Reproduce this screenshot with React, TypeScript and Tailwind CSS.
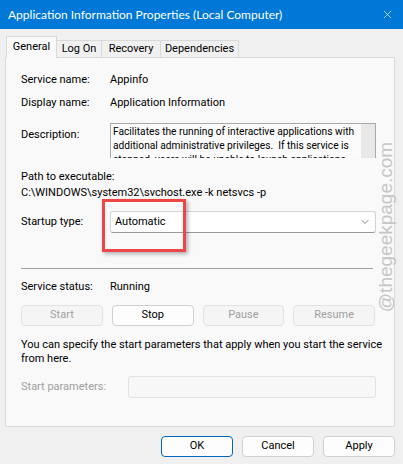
import { X, ChevronDown } from "lucide-react";

const font = "font-['Roboto','Noto_Sans',sans-serif]";

function Btn({ label, disabled, primary }: { label: string; disabled?: boolean; primary?: boolean }) {
  return (
    <div
      className={`flex h-[21px] items-center justify-center rounded-[4px] border ${
        disabled
          ? "border-[#e2e2e2] bg-[#f5f5f5] text-[#a0a0a0]"
          : primary
            ? "border-[#0067c0] bg-[#fdfdfd] text-black"
            : "border-[#d0d0d0] bg-[#fdfdfd] text-black"
      }`}
    >
      {label}
    </div>
  );
}

export default function App() {
  return (
    <div className={`relative h-[464px] w-[403px] overflow-hidden bg-[#f0f0f0] text-[11px] text-black ${font}`}>
      {/* title bar */}
      <div className="flex h-[29px] items-center justify-between bg-[#0078d7] pr-[9px] pl-[8px] font-['Lato',sans-serif] text-[12px] text-white">
        <span>Application Information Properties (Local Computer)</span>
        <X size={13} strokeWidth={1.2} />
      </div>

      {/* tabs */}
      <div className="relative z-10 mt-[7px] flex h-[21px] items-end pl-[6px]">
        <div className="mb-[-1px] flex h-[22px] w-[51px] items-start justify-center border border-b-0 border-[#d9d9d9] bg-[#f9f9f9] pt-[2px]">
          General
        </div>
        <div className="flex h-[17px] w-[45px] items-center justify-center border border-b-0 border-l-0 border-[#d9d9d9]">
          Log On
        </div>
        <div className="flex h-[17px] w-[59px] items-center justify-center border border-b-0 border-l-0 border-[#d9d9d9]">
          Recovery
        </div>
        <div className="flex h-[17px] w-[78px] items-center justify-center border border-b-0 border-l-0 border-[#d9d9d9]">
          Dependencies
        </div>
      </div>

      {/* panel */}
      <div className="ml-[5px] flex h-[370px] w-[390px] flex-col border border-[#dadada] bg-[#f9f9f9] pr-[18px] pl-[15px]">
        <div className="mt-[14px] flex h-4 items-center leading-4">
          <span className="w-[89px]">Service name:</span>
          <span>Appinfo</span>
        </div>
        <div className="mt-[7px] flex h-4 items-center leading-4">
          <span className="w-[89px]">Display name:</span>
          <span>Application Information</span>
        </div>
        <div className="mt-[12px] flex h-[35px]">
          <span className="w-[89px] pt-[4px] leading-4">Description:</span>
          <div className="flex h-[35px] w-[266px] overflow-hidden border border-b-0 border-[#a8a8a8] bg-[#fbfbfb]">
            <div className="min-w-0 flex-1 overflow-hidden pt-px pl-[2px] text-[10.2px] leading-[14px] whitespace-pre">
              <div>Facilitates the running of interactive applications with</div>
              <div>additional administrative privileges.  If this service is</div>
              <div>stopped, users will be unable to launch applications</div>
            </div>
            <div className="w-[14px] shrink-0 bg-[#e8e8e8]" />
          </div>
        </div>
        <div className="mt-[11px] h-4 leading-4">Path to executable:</div>
        <div className="h-4 leading-4">C:\WINDOWS\system32\svchost.exe -k netsvcs -p</div>
        <div className="mt-[10px] flex h-[22px] items-center">
          <span className="w-[89px]">Startup type:</span>
          <div className="flex h-[22px] w-[266px] items-center justify-between rounded-[3px] border border-[#d4d4d4] border-b-[#9a9a9a] bg-white pr-[4px] pl-[4px]">
            <span>Automatic</span>
            <ChevronDown size={12} strokeWidth={1.3} className="text-[#444]" />
          </div>
        </div>
        <div className="mt-[35px] h-px w-[352px] bg-[#a0a0a0]" />
        <div className="mt-[10px] flex h-4 items-center leading-4">
          <span className="w-[89px]">Service status:</span>
          <span>Running</span>
        </div>
        <div className="mt-[10px] grid w-[354px] grid-cols-4 gap-[9px]">
          <Btn label="Start" disabled />
          <Btn label="Stop" />
          <Btn label="Pause" disabled />
          <Btn label="Resume" disabled />
        </div>
        <div className="mt-[12px] leading-[14px] whitespace-nowrap">
          You can specify the start parameters that apply when you start the service
          <br />
          from here.
        </div>
        <div className="mt-[10px] flex h-[22px] items-center">
          <span className="w-[107px] text-[#a0a0a0]">Start parameters:</span>
          <div className="h-[22px] w-[248px] rounded-[3px] border border-[#e3e3e3] bg-[#f7f7f7]" />
        </div>
      </div>

      {/* dialog buttons */}
      <div className="mt-[9px] flex justify-end gap-[9px] pr-[8px]">
        <div className="w-[72px]">
          <Btn label="OK" primary />
        </div>
        <div className="w-[72px]">
          <Btn label="Cancel" />
        </div>
        <div className="w-[72px]">
          <Btn label="Apply" />
        </div>
      </div>

      {/* highlight */}
      <div className="absolute top-[199px] left-[102px] h-[53px] w-[84px] border-[3px] border-[#ee4646] shadow-[2px_2px_4px_rgba(0,0,0,0.3)]" />

      {/* watermark */}
      <div className="absolute top-[227px] left-[386px] -translate-x-1/2 -translate-y-1/2 -rotate-90 font-['Liberation_Sans',sans-serif] text-[19px] whitespace-nowrap text-[#c6c6c6]">
        @thegeekpage.com
      </div>
    </div>
  );
}
